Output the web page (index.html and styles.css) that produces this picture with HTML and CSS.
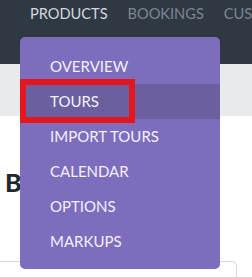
FILE: index.html
```html
<!DOCTYPE html>
<html lang="en">
<head>
  <meta charset="UTF-8" />
  <title>Products menu</title>
  <link rel="stylesheet" href="styles.css">
</head>
<body>

<header class="topbar">
  <nav class="main-nav">
    <a href="#" class="nav-link active">PRODUCTS</a>
    <a href="#" class="nav-link">BOOKINGS</a>
    <a href="#" class="nav-link">CUSTOMERS</a>
  </nav>

  <ul class="dropdown">
    <li><a href="#">OVERVIEW</a></li>
    <li class="current"><a href="#">TOURS</a></li>
    <li><a href="#">IMPORT TOURS</a></li>
    <li><a href="#">CALENDAR</a></li>
    <li><a href="#">OPTIONS</a></li>
    <li><a href="#">MARKUPS</a></li>
  </ul>
  <div class="highlight-box"></div>
</header>

<div class="subbar"></div>

<main class="content">
  <h1 class="page-title">Browse tours</h1>
  <div class="card"></div>
</main>

</body>
</html>
```

FILE: styles.css
```css
body {
  margin: 0;
  font-family: Lato, 'Open Sans', sans-serif;
  background: #fff;
  overflow: hidden;
}
.topbar {
  position: relative;
  height: 64px;
  background: #2f3944;
}
.main-nav {
  display: flex;
  gap: 20px;
  padding: 5px 0 0 30px;
  white-space: nowrap;
  overflow: hidden;
}
.nav-link {
  color: #7d8590;
  font-size: 14.6px;
  line-height: 18px;
  text-decoration: none;
}
.nav-link.active {
  color: #d4d8dd;
}
.dropdown {
  position: absolute;
  left: 20px;
  top: 37px;
  width: 200px;
  margin: 0;
  padding: 12px 0 10px;
  list-style: none;
  background: #7e6cbd;
  border-radius: 5px;
  z-index: 2;
}
.dropdown li a {
  display: block;
  height: 35px;
  line-height: 34px;
  padding-left: 30px;
  color: #f3f1fb;
  font-size: 15px;
  text-decoration: none;
}
.dropdown li.current a {
  background: #6c5f9f;
}
.highlight-box {
  position: absolute;
  left: 20px;
  top: 79px;
  width: 103px;
  height: 32px;
  border: 6px solid #e5171d;
  z-index: 3;
}
.subbar {
  height: 52px;
  background: #e9eaec;
}
.content {
  padding: 51px 15px 0 5px;
}
.page-title {
  margin: 0;
  font-size: 25px;
  line-height: 30px;
  font-weight: 900;
  color: #1d2a33;
}
.card {
  margin: 64px 0 0 -10px;
  height: 40px;
  border: 1px solid #d5d9de;
  border-radius: 5px;
}
```
